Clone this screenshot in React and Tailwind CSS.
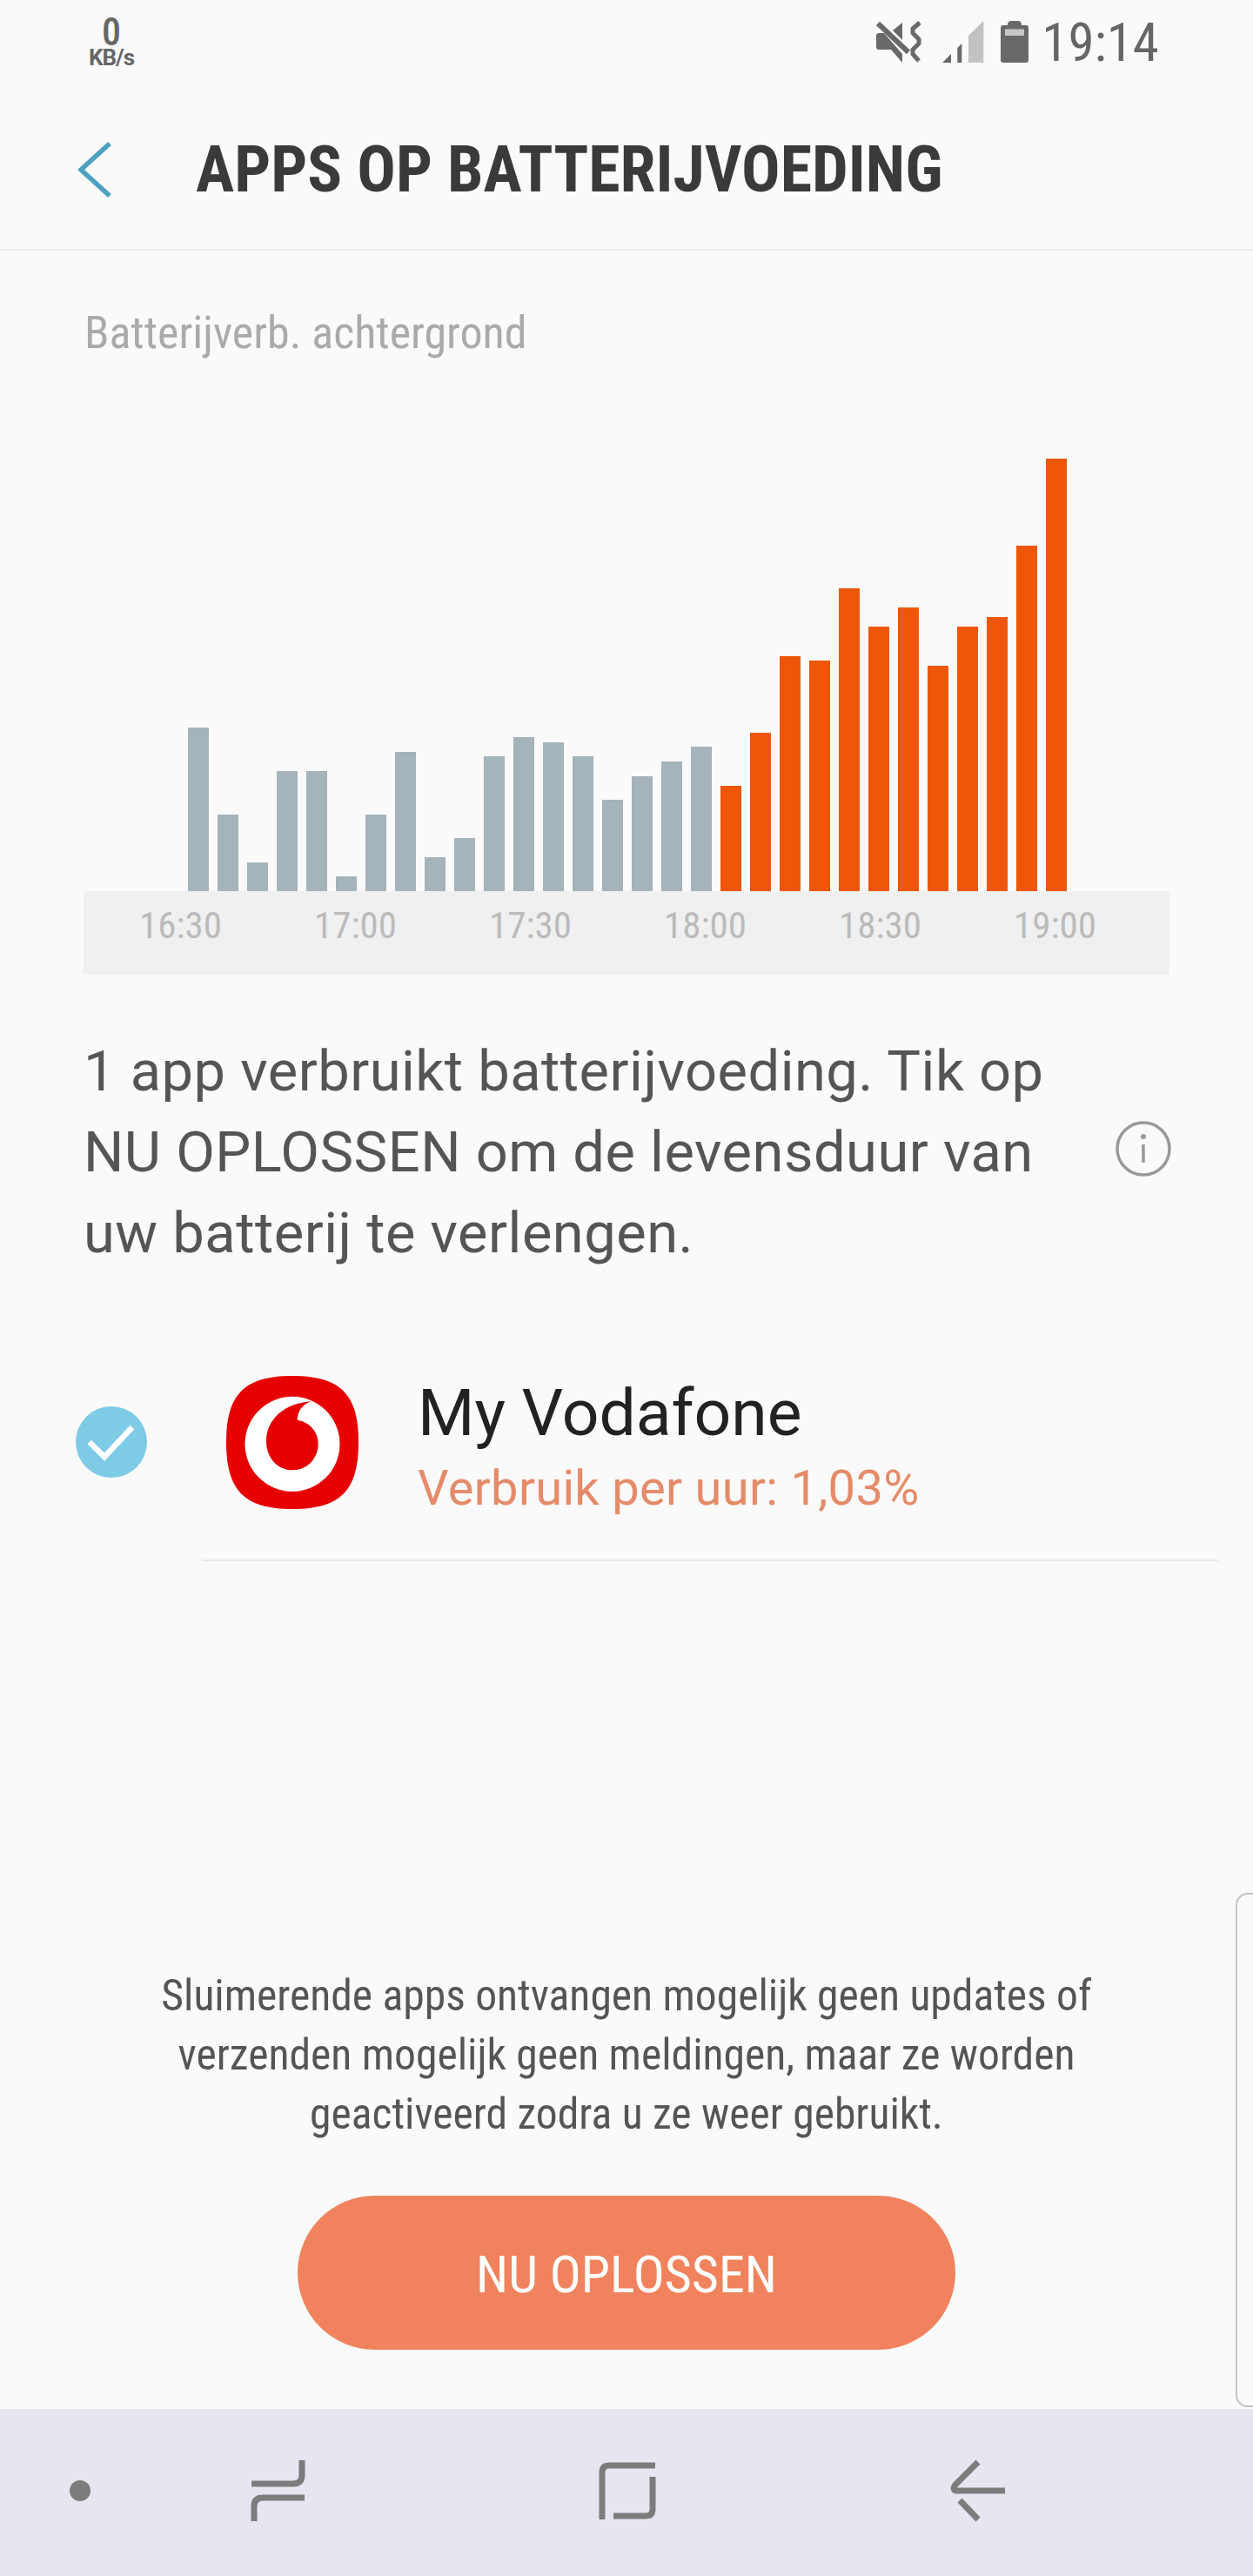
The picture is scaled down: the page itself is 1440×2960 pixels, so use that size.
import React from 'react';

const bars = [188, 88, 33, 138, 138, 17, 88, 160, 39, 61, 155, 177, 171, 155, 105, 132, 149, 166, 121, 182, 270, 265, 348, 304, 326, 259, 304, 315, 397, 497];
const labels = ['16:30', '17:00', '17:30', '18:00', '18:30', '19:00'];

function StatusIcons() {
	return (
		<div className="flex items-start gap-[25px]">
			<svg width="52" height="48" viewBox="0 0 52 48" fill="none">
				<path d="M0 17 Q0 14 3 14 H9 L30 38 V48 L17 33 H3 Q0 33 0 30 Z" fill="#696969" />
				<path d="M19 11 L30 2 V22 Z" fill="#696969" />
				<path d="M2 3 L37 36" stroke="#696969" strokeWidth="6" />
				<path d="M50 2 L42 9 V14 L49 21 V26 L42 33 V38 L49 46" stroke="#696969" strokeWidth="5" strokeLinejoin="round" />
			</svg>
			<svg width="48" height="48" viewBox="0 0 48 48" className="-ml-[1px]">
				<path d="M0 48 L10 38 V48 Z" fill="#696969" />
				<path d="M17.3 31 L22.3 26 V48 H17.3 Z" fill="#696969" />
				<path d="M30 48 V17 L47.3 0 V48 Z" fill="#c2c2c2" />
			</svg>
			<svg width="32" height="48" viewBox="0 0 32 48" className="-ml-[6px]">
				<path d="M8 5 Q8 0 12 0 H20 Q24 0 24 5 H29 Q32 5 32 8 V45 Q32 48 29 48 H3 Q0 48 0 45 V8 Q0 5 3 5 Z" fill="#696969" />
				<rect x="5" y="9.5" width="22" height="7.5" fill="#c6c6c6" />
			</svg>
		</div>
	);
}

function VodafoneIcon() {
	return (
		<svg width="152" height="153" viewBox="0 0 152 153" className="shrink-0">
			<path d="M76 0 C132 0 152 22 152 76 C152 131 132 153 76 153 C20 153 0 131 0 76 C0 22 20 0 76 0 Z" fill="#e60000" />
			<circle cx="76" cy="78.3" r="54.5" fill="#ffffff" />
			<path d="M98.3 29.3 C67 31 46 50 46 75 C46 94 59 108.3 76 108.3 C93 108.3 105.7 95 105.7 78.3 C105.7 63 95 53 81.7 50.7 C81.7 39 90 31 98.3 29.3 Z" fill="#e60000" />
		</svg>
	);
}

export default function App() {
	return (
		<div className="relative flex h-[2960px] w-[1440px] flex-col overflow-hidden bg-[#fafafa] font-[Roboto,sans-serif]">
			{/* Status bar */}
			<div className="flex h-[100px] shrink-0 items-start justify-between pl-[98px] pr-[108px]">
				<div className="flex w-[60px] flex-col items-center pt-[19px] text-[#666666]">
					<span className="text-[44px] font-medium leading-[36px] [font-stretch:75%]">0</span>
					<span className="text-[26px] font-bold leading-[22px] tracking-[-1px]">KB/s</span>
				</div>
				<div className="flex items-start gap-[15px] pt-[24px]">
					<StatusIcons />
					<span className="-mt-[10px] text-[61px] leading-[70px] text-[#666666] [font-stretch:75%]">19:14</span>
				</div>
			</div>

			{/* Title bar */}
			<div className="flex h-[188px] shrink-0 items-center border-b-2 border-[#ebebeb] pl-[90px] pt-[3px]">
				<svg width="38" height="64" viewBox="0 0 38 64" fill="none" className="shrink-0">
					<path d="M36 2 L3 32 L36 62" stroke="#4da0c0" strokeWidth="5.5" />
				</svg>
				<h1 className="ml-[97px] text-[74px] font-bold leading-none text-[#3a3a3a] [font-stretch:75%]">APPS OP BATTERIJVOEDING</h1>
			</div>

			{/* Chart */}
			<p className="mt-[65px] pl-[97px] text-[52px] leading-[60px] text-[#aaaaaa] [font-stretch:75%]">Batterijverb. achtergrond</p>
			<div className="mx-[96px] mt-[91px] flex h-[520px] items-end gap-[10px] pl-[120px]">
				{bars.map((h, i) => (
					<div key={i} className={i < 18 ? 'w-[24px] bg-[#a5b3ba]' : 'w-[24px] bg-[#ee5709]'} style={{ height: h }} />
				))}
			</div>
			<div className="mx-[96px] grid h-[96px] grid-cols-[repeat(6,201px)] bg-[#f0f0f0] pl-[11px] pt-[15px] text-center text-[43px] leading-[48px] text-[#bbbbbb] [font-stretch:75%]">
				{labels.map((l) => (
					<span key={l}>{l}</span>
				))}
			</div>

			{/* Message */}
			<div className="mt-[65px] flex items-center pl-[96px] pr-[94px]">
				<p className="flex-1 text-[65px] leading-[93px] tracking-[0.5px] text-[#555555]">
					1 app verbruikt batterijvoeding. Tik op
					<br />
					NU OPLOSSEN om de levensduur van
					<br />
					uw batterij te verlengen.
				</p>
				<svg width="64" height="64" viewBox="0 0 64 64" fill="none" className="mb-[10px] shrink-0">
					<circle cx="32" cy="32" r="30" stroke="#999999" strokeWidth="3.5" />
					<circle cx="32" cy="18" r="3" fill="#999999" />
					<path d="M32 27 V48" stroke="#999999" strokeWidth="3.5" />
				</svg>
			</div>

			{/* App row */}
			<div className="ml-[87px] mt-[104px] flex items-center">
				<div className="flex h-[82px] w-[82px] shrink-0 items-center justify-center rounded-full bg-[#7ecbe5]">
					<svg width="82" height="82" viewBox="0 0 82 82" fill="none">
						<path d="M15.7 41 L33 58 L65 24" stroke="#ffffff" strokeWidth="6.5" />
					</svg>
				</div>
				<div className="ml-[91px]">
					<VodafoneIcon />
				</div>
				<div className="ml-[68px] flex flex-col pt-[13px]">
					<span className="text-[75px] leading-[84px] text-[#222222]">My Vodafone</span>
					<span className="mt-[9px] text-[56px] leading-[72px] tracking-[0.33px] text-[#e58b69]">Verbruik per uur: 1,03%</span>
				</div>
			</div>
			<div className="ml-[232px] mr-[40px] mt-[46px] h-[2px] bg-[#e8e8e8]" />

			{/* Bottom note and action */}
			<div className="mt-auto flex flex-col items-center">
				<p className="text-center text-[49.6px] leading-[68px] text-[#555555] [font-stretch:75%]">
					Sluimerende apps ontvangen mogelijk geen updates of
					<br />
					verzenden mogelijk geen meldingen, maar ze worden
					<br />
					geactiveerd zodra u ze weer gebruikt.
				</p>
				<button className="mb-[68px] mt-[60px] flex h-[177px] w-[756px] items-center justify-center rounded-full bg-[#f0835d] pt-[4px] text-[60px] text-white [font-stretch:75%]">
					NU OPLOSSEN
				</button>
			</div>

			{/* Nav bar */}
			<div className="flex h-[192px] shrink-0 items-start bg-[#e5e6f0]">
				<svg width="1440" height="192" viewBox="0 2768 1440 192" fill="none">
					<circle cx="92" cy="2862" r="12" fill="#7c7c7c" />
					<g stroke="#7c7c7c" strokeWidth="7">
						<path d="M347 2827 V2844 Q347 2854 337 2854 H289" />
						<path d="M350 2870 H302 Q292 2870 292 2880 V2897" />
						<path d="M692 2895 V2841 Q692 2833 700 2833 H753" />
						<path d="M750 2846 V2883 Q750 2891 742 2891 H705" />
						<path d="M1124 2829 L1098 2855 Q1093 2862 1101 2862 H1155" />
						<path d="M1103 2873 L1124 2895" />
					</g>
				</svg>
			</div>

			{/* Edge panel handle */}
			<div className="absolute bottom-[194px] right-0 h-[591px] w-[20px] rounded-l-[14px] border-y-2 border-l-2 border-[#c4c4c4]" />
		</div>
	);
}
